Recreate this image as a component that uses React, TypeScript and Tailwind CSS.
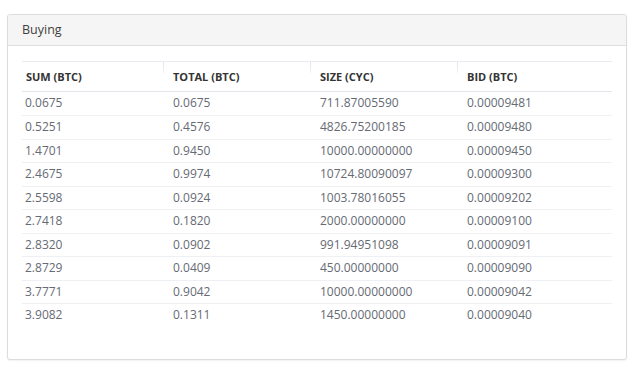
import React from "react";

// ─── Data ─────────────────────────────────────────────────────────────────────

const COLUMNS = ["SUM (BTC)", "TOTAL (BTC)", "SIZE (CYC)", "BID (BTC)"];

const ROWS: [string, string, string, string][] = [
    ["0.0675", "0.0675", "711.87005590", "0.00009481"],
    ["0.5251", "0.4576", "4826.75200185", "0.00009480"],
    ["1.4701", "0.9450", "10000.00000000", "0.00009450"],
    ["2.4675", "0.9974", "10724.80090097", "0.00009300"],
    ["2.5598", "0.0924", "1003.78016055", "0.00009202"],
    ["2.7418", "0.1820", "2000.00000000", "0.00009100"],
    ["2.8320", "0.0902", "991.94951098", "0.00009091"],
    ["2.8729", "0.0409", "450.00000000", "0.00009090"],
    ["3.7771", "0.9042", "10000.00000000", "0.00009042"],
    ["3.9082", "0.1311", "1450.00000000", "0.00009040"],
];

const GRID = "grid grid-cols-[141px_147px_147px_1fr]";

// ─── App ──────────────────────────────────────────────────────────────────────

export default function App() {
    return (
        <div className="min-h-[373px] w-[640px] bg-white pt-[14px] pl-[7px] font-['Open_Sans',sans-serif]">
            <div className="h-[346px] w-[620px] rounded-[3px] border border-[#dcdcdc] bg-white shadow-[0_1px_2px_rgba(0,0,0,0.06)] overflow-hidden">
                {/* Header */}
                <div className="h-[31px] flex items-center border-b border-[#dfdfdf] bg-[#f5f5f5] px-[14px] text-[12.5px] text-[#3f3f3f]">
                    Buying
                </div>

                {/* Table */}
                <div className="px-[14px] pt-[15px]">
                    <div className={`${GRID} h-[30.5px] border-t border-[#e9ebf0] border-b border-b-[#e4e6eb]`}>
                        {COLUMNS.map((col, i) => (
                            <div key={col} className="relative flex items-center">
                                {i > 0 && (
                                    <div className="absolute left-0 top-0 h-[11px] w-px bg-gradient-to-b from-[#e2e4e9] to-[#f2f3f5]" />
                                )}
                                <span
                                    className={`${i === 0 ? "pl-[4px]" : "pl-[10px]"} pt-[1px] text-[11px] font-bold text-[#333333]`}
                                >
                                    {col}
                                </span>
                            </div>
                        ))}
                    </div>

                    {ROWS.map((row, r) => (
                        <div
                            key={r}
                            className={`${GRID} h-[23.5px] ${r > 0 ? "border-t border-[#eef0f3]" : ""}`}
                        >
                            {row.map((cell, i) => (
                                <div
                                    key={i}
                                    className={`flex items-center ${i === 0 ? "pl-[3px]" : "pl-[10px]"} text-[12px] text-[#666a73]`}
                                >
                                    {cell}
                                </div>
                            ))}
                        </div>
                    ))}
                </div>
            </div>
        </div>
    );
}
